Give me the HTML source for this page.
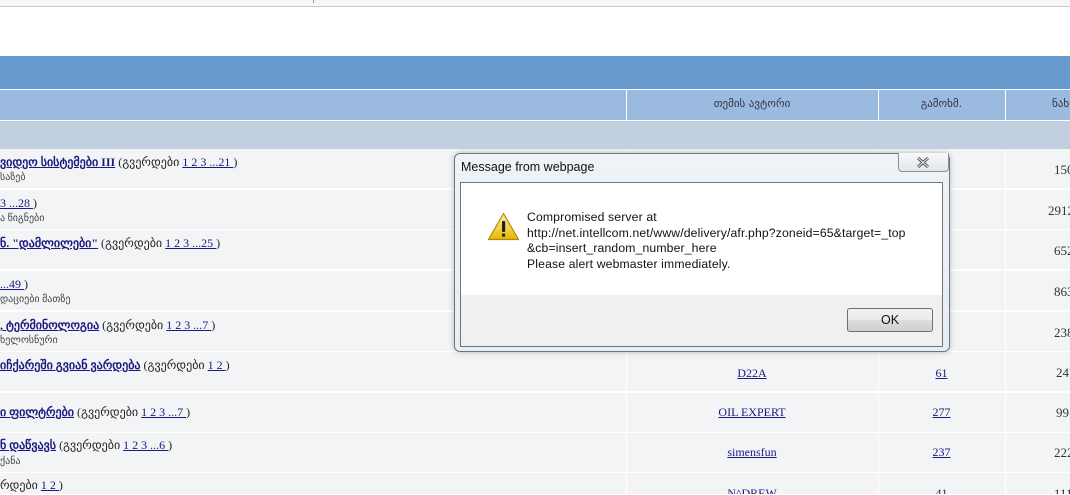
<!DOCTYPE html>
<html style="overflow:hidden;height:495px"><head><meta charset="utf-8"><style>
*{margin:0;padding:0;box-sizing:border-box}
body{width:1070px;height:495px;overflow:hidden;background:#fff;font-family:"Liberation Serif",serif;position:relative}
.a{position:absolute}
a{color:#1a1a80}
.row{position:absolute;left:0;width:1070px;height:40px;background:#f3f4f5;border-bottom:1px solid #fff;overflow:hidden}
.t{position:absolute;left:0;top:6px;font-size:12px;color:#222;white-space:nowrap}
.t b a{color:#1a1a80}
.s{position:absolute;left:0;top:23px;font-size:10px;color:#444;white-space:nowrap}
.c{position:absolute;font-size:12px;text-align:center;top:14px}
.n{position:absolute;left:1054px;top:13px;font-size:13px;color:#333}
.vl{position:absolute;top:149px;width:1px;height:346px;background:#fff}
.dlg{font-family:"Liberation Sans",sans-serif}
</style></head><body>
<div class="a" style="left:0;top:0;width:1070px;height:7px;background:#f5f7f6;border-bottom:1px solid #c8ccd0"></div>
<div class="a" style="left:313px;top:0;width:1px;height:3px;background:#999"></div>
<div class="a" style="left:0;top:56px;width:1070px;height:33px;background:#6699cc"></div>
<div class="a" style="left:0;top:90px;width:1070px;height:30px;background:#9bbae0"></div>
<div class="a" style="left:626px;top:90px;width:1px;height:30px;background:#fff"></div>
<div class="a" style="left:878px;top:90px;width:1px;height:30px;background:#fff"></div>
<div class="a" style="left:1005px;top:90px;width:1px;height:30px;background:#fff"></div>
<div class="a" style="left:626px;top:97px;width:252px;text-align:center;font-size:11px;color:#334;font-family:'DejaVu Sans',sans-serif">თემის ავტორი</div>
<div class="a" style="left:878px;top:97px;width:127px;text-align:center;font-size:11px;color:#334;font-family:'DejaVu Sans',sans-serif">გამოხმ.</div>
<div class="a" style="left:1052px;top:97px;font-size:11px;color:#334;font-family:'DejaVu Sans',sans-serif">ნახ</div>
<div class="a" style="left:0;top:121px;width:1070px;height:28px;background:#c2cfe0"></div>

<div class="row" style="top:149px"><div class="t"><b><a href="#">ვიდეო სისტემები III</a></b> (გვერდები <a href="#">1 2 3 ...21 </a>)</div><div class="s">საზებ</div><div class="n">150</div></div>
<div class="row" style="top:190px"><div class="t"><a href="#">3 ...28 </a>)</div><div class="s">ა წიგნები</div><div class="n" style="left:1048px">2912</div></div>
<div class="row" style="top:230px"><div class="t"><b><a href="#">ნ. "დამლილები"</a></b> (გვერდები <a href="#">1 2 3 ...25 </a>)</div><div class="n">652</div></div>
<div class="row" style="top:271px"><div class="t"><a href="#">...49 </a>)</div><div class="s">დაციები მათზე</div><div class="n">863</div></div>
<div class="row" style="top:312px"><div class="t"><b><a href="#">, ტერმინოლოგია</a></b> (გვერდები <a href="#">1 2 3 ...7 </a>)</div><div class="s">ხელოსნური</div><div class="n">238</div></div>
<div class="row" style="top:352px"><div class="t"><b><a href="#">იჩქარეში გვიან ვარდება</a></b> (გვერდები <a href="#">1 2 </a>)</div><div class="c" style="left:626px;width:252px"><a href="#">D22A</a></div><div class="c" style="left:878px;width:127px"><a href="#">61</a></div><div class="n" style="left:1056px">247</div></div>
<div class="row" style="top:393px"><div class="t" style="top:12px"><b><a href="#">ი ფილტრები</a></b> (გვერდები <a href="#">1 2 3 ...7 </a>)</div><div class="c" style="left:626px;width:252px;top:12px"><a href="#">OIL EXPERT</a></div><div class="c" style="left:878px;width:127px;top:12px"><a href="#">277</a></div><div class="n" style="left:1056px;top:12px">991</div></div>
<div class="row" style="top:433px"><div class="t" style="top:5px"><b><a href="#">ნ დაწვავს</a></b> (გვერდები <a href="#">1 2 3 ...6 </a>)</div><div class="s">ქანა</div><div class="c" style="left:626px;width:252px;top:12px"><a href="#">simensfun</a></div><div class="c" style="left:878px;width:127px;top:12px"><a href="#">237</a></div><div class="n" style="top:12px">222</div></div>
<div class="row" style="top:473px;height:22px"><div class="t" style="top:5px">რდები <a href="#">1 2 </a>)</div><div class="c" style="left:626px;width:252px;top:13px"><a href="#">N^DREW</a></div><div class="c" style="left:878px;width:127px;top:13px"><a href="#">41</a></div><div class="n" style="top:13px">111</div></div>
<div class="vl" style="left:626px"></div><div class="vl" style="left:878px"></div><div class="vl" style="left:1005px"></div>

<div class="a dlg" style="left:454px;top:153px;width:496px;height:199px;background:linear-gradient(#eef3f7,#e6edf3);border:1px solid #6d7580;border-radius:6px;box-shadow:0 0 6px rgba(0,0,0,.25)">
 <div class="a" style="left:6px;top:6px;font-size:12.5px;color:#111">Message from webpage</div>
 <div class="a" style="left:443px;top:-1px;width:51px;height:19px;border:1px solid #8a929c;border-top:none;border-radius:0 0 4px 4px;background:linear-gradient(#f8f9fa,#e2e6ea)"><svg width="51" height="19" style="position:absolute;left:-1px;top:0"><path d="M20 5 L30 14 M30 5 L20 14" stroke="#555" stroke-width="3"/><path d="M20 5 L30 14 M30 5 L20 14" stroke="#eee" stroke-width="1"/></svg></div>
 <div class="a" style="left:5px;top:28px;width:483px;height:165px;border:1px solid #6d7580;background:#f0f0f0">
  <div class="a" style="left:0;top:0;width:481px;height:112px;background:#fff"></div>
  <svg class="a" style="left:26px;top:29px" width="33" height="29"><defs><linearGradient id="g" x1="0" y1="0" x2="0" y2="1"><stop offset="0" stop-color="#fff2a0"/><stop offset="1" stop-color="#e8b800"/></linearGradient></defs><path d="M16.5 1.5 L31.5 27.5 L1.5 27.5 Z" fill="url(#g)" stroke="#b08a10" stroke-width="1.2" stroke-linejoin="round"/><rect x="15" y="9" width="3.2" height="11" rx="1" fill="#222"/><rect x="15" y="21.5" width="3.2" height="3.2" rx="1" fill="#222"/></svg>
  <div class="a" style="left:66px;top:27px;font-size:12.2px;letter-spacing:0.15px;line-height:15.5px;color:#111;white-space:nowrap">Compromised server at<br>http://net.intellcom.net/www/delivery/afr.php?zoneid=65&amp;target=_top<br>&amp;cb=insert_random_number_here<br>Please alert webmaster immediately.</div>
  <div class="a" style="left:386px;top:125px;width:86px;height:24px;border:1px solid #707070;border-radius:3px;background:linear-gradient(#f2f2f2 0,#ebebeb 50%,#dddddd 51%,#cfcfcf 100%);font-size:12.5px;text-align:center;line-height:22px;color:#111">OK</div>
 </div>
</div>
</body></html>
